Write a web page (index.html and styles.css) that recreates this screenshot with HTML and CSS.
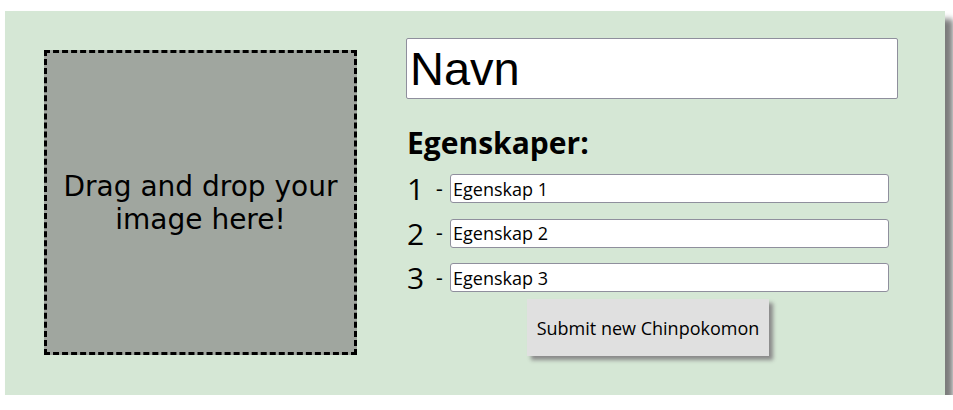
FILE: index.html
```html
<!DOCTYPE html>
<html lang="no">
<head>
<meta charset="utf-8">
<title>Ny Chinpokomon</title>
<link rel="stylesheet" href="styles.css">
</head>
<body>
<form class="card">
  <div class="drop">Drag and drop your image here!</div>
  <div class="right">
    <input class="name" type="text" value="Navn">
    <h2 class="heading">Egenskaper:</h2>
    <div class="rows">
      <div class="row"><span class="num"><span class="digit">1</span><span class="dash">-</span></span><input class="prop" type="text" value="Egenskap 1"></div>
      <div class="row"><span class="num"><span class="digit">2</span><span class="dash">-</span></span><input class="prop" type="text" value="Egenskap 2"></div>
      <div class="row"><span class="num"><span class="digit">3</span><span class="dash">-</span></span><input class="prop" type="text" value="Egenskap 3"></div>
    </div>
    <button class="submit" type="button">Submit new Chinpokomon</button>
  </div>
</form>
</body>
</html>
```
FILE: styles.css
```css
body {
  margin: 0;
  background: #fff;
  font-family: "Open Sans", sans-serif;
  color: #000;
}
.card {
  margin: 11px 0 0 5px;
  width: 940px;
  height: 384px;
  box-sizing: border-box;
  padding: 27px 0 0 39px;
  display: flex;
  align-items: flex-start;
  gap: 49px;
  background: #d5e7d5;
  box-shadow: 8px 8px 6px #7c7c7c;
}
.drop {
  margin-top: 12px;
  width: 313px;
  height: 305px;
  box-sizing: border-box;
  border: 3px dashed #000;
  background: #a0a69f;
  display: flex;
  align-items: center;
  justify-content: center;
  text-align: center;
  font-family: "DejaVu Sans", sans-serif;
  font-size: 28px;
  line-height: 33px;
  padding: 0;
}
.right {
  width: 492px;
  display: flex;
  flex-direction: column;
}
.name {
  width: 492px;
  height: 61px;
  box-sizing: border-box;
  border: 1px solid #8f8f9d;
  border-radius: 2px;
  padding: 0 3px;
  margin: 0;
  font-family: "Liberation Sans", Arial, sans-serif;
  font-size: 47px;
  color: #000;
  background: #fff;
}
.heading {
  margin: 26px 0 0 1px;
  font-size: 30px;
  line-height: 36px;
  font-weight: 700;
}
.rows {
  margin-top: 13px;
  display: flex;
  flex-direction: column;
  gap: 15.5px;
}
.row {
  height: 29px;
  display: flex;
  align-items: center;
}
.num {
  width: 44px;
  height: 29px;
  display: flex;
  align-items: center;
}
.digit {
  margin-left: 1px;
  font-family: "Open Sans", sans-serif;
  font-weight: 400;
  font-size: 30px;
  line-height: 29px;
}
.dash {
  margin-left: auto;
  margin-right: 7px;
  font-family: "DejaVu Sans", sans-serif;
  font-size: 20px;
  line-height: 24px;
}
.prop {
  width: 439px;
  height: 29px;
  box-sizing: border-box;
  border: 1px solid #8f8f9d;
  border-radius: 3px;
  padding: 0 2px;
  font-family: "Open Sans", sans-serif;
  font-size: 18px;
  color: #000;
  background: #fff;
}
.submit {
  margin: 7px 0 0 121px;
  width: 242px;
  height: 57px;
  border: none;
  background: #e0e0e0;
  box-shadow: 4px 4px 4px #8a8a8a;
  font-family: "Open Sans", sans-serif;
  font-size: 18px;
  color: #000;
  padding: 0;
}
```
